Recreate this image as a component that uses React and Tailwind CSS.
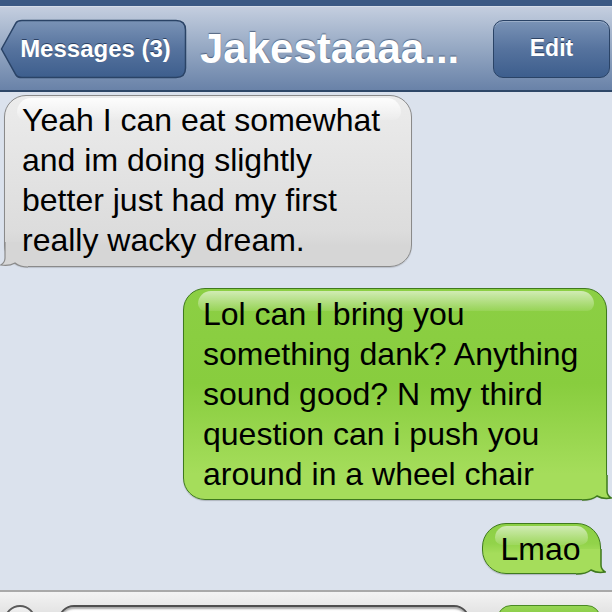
import React from "react";

const font = { fontFamily: '"Liberation Sans", Arial, sans-serif' };

function BackButton() {
  return (
    <div className="relative w-[187px] h-[60px] flex items-center">
      <svg className="absolute inset-0" width="187" height="60" viewBox="0 0 187 60">
        <defs>
          <linearGradient id="bb" x1="0" y1="0" x2="0" y2="1">
            <stop offset="0" stopColor="#7a93b6" />
            <stop offset="0.5" stopColor="#56739e" />
            <stop offset="1" stopColor="#3d5e8d" />
          </linearGradient>
        </defs>
        <path
          d="M1.5 30 L16 4 Q17.5 1.5 22 1.5 L176 1.5 Q185.5 1.5 185.5 11 L185.5 49 Q185.5 58.5 176 58.5 L22 58.5 Q17.5 58.5 16 56 Z"
          fill="url(#bb)"
          stroke="#2a4366"
          strokeWidth="1.5"
        />
      </svg>
      <span className="relative w-full pl-[4px] text-center text-[24px] font-bold text-white [text-shadow:0_-1px_0_rgba(20,40,70,0.7)]">
        Messages (3)
      </span>
    </div>
  );
}

function GrayTail() {
  return (
    <svg className="absolute left-[-5px] bottom-[-2px]" width="28" height="26" viewBox="0 0 28 26">
      <path d="M5 0 L5 16 Q5 20.5 0.8 23 Q9 24.5 15 21 Q20 25 28 25 L28 0 Z" fill="#d6d6d6" />
      <path d="M5 0 L5 16 Q5 20.5 0.8 23 Q9 24.5 15 21 Q20 25 28 25" fill="none" stroke="#8a8a8a" strokeWidth="1.2" />
    </svg>
  );
}

function GreenTail({ className }) {
  return (
    <svg className={className} width="30" height="26" viewBox="0 0 30 26">
      <path d="M25 0 L25 16 Q25 20.5 29.2 23 Q21 24.5 15 21 Q10 25 0 25 L0 0 Z" fill="#a5dd5b" />
      <path d="M25 0 L25 16 Q25 20.5 29.2 23 Q21 24.5 15 21 Q10 25 0 25" fill="none" stroke="#3f7a1e" strokeWidth="1.5" />
    </svg>
  );
}

export default function App() {
  return (
    <div className="w-[612px] h-[612px] overflow-hidden flex flex-col bg-[#dbe2ed]" style={font}>
      <div className="h-[6px] bg-[#3b5984]" />
      <div className="h-[86px] flex items-center border-t border-[#d5dde9] border-b-2 border-b-[#2e4768] bg-linear-to-b from-[#c4cedf] via-[#95a8c3] to-[#6982a8]">
        <BackButton />
        <div className="ml-[13px] text-[42px] font-bold text-white leading-none [text-shadow:0_-1px_1px_rgba(30,50,80,0.6)]">
          Jakestaaaa...
        </div>
        <div className="ml-auto mr-[2px] w-[117px] h-[58px] rounded-[10px] border-[1.5px] border-[#2a4366] bg-linear-to-b from-[#7a93b6] via-[#56739e] to-[#3d5e8d] flex items-center justify-center shadow-[inset_0_1px_0_rgba(255,255,255,0.25)]">
          <span className="text-[23px] font-bold text-white [text-shadow:0_-1px_0_rgba(20,40,70,0.7)]">Edit</span>
        </div>
      </div>

      <div className="flex-1 flex flex-col">
        <div className="relative ml-[4px] mt-[3px] w-[408px] h-[172px] rounded-[22px] border border-[#8a8a8a] bg-[linear-gradient(to_bottom,#ececec,#dcdcdc_80%,#d6d6d6_88%,#d6d6d6)] shadow-[0_1px_1px_rgba(0,0,0,0.15)] pt-[4px] pl-[17px]">
          <div className="absolute top-[2px] left-[12px] right-[10px] h-[22px] rounded-t-[18px] rounded-b-[10px] bg-linear-to-b from-white/90 to-white/10" />
          <GrayTail />
          <div className="relative text-[32px] leading-[40px] text-black">
            <div>Yeah I can eat somewhat</div>
            <div>and im doing slightly</div>
            <div>better just had my first</div>
            <div>really wacky dream.</div>
          </div>
        </div>

        <div className="relative self-end mr-[5px] mt-[21px] w-[424px] h-[212px] rounded-[22px] border-[1.5px] border-[#3f7a1e] bg-[linear-gradient(to_bottom,#8ccf44,#88cd3e_45%,#a5dd5b_88%,#a5dd5b)] shadow-[0_1px_1px_rgba(0,0,0,0.2)] pt-[5px] pl-[19px]">
          <div className="absolute top-[2px] left-[14px] right-[12px] h-[20px] rounded-t-[18px] rounded-b-[10px] bg-linear-to-b from-white/60 to-white/10" />
          <GreenTail className="absolute right-[-6px] bottom-[-2px]" />
          <div className="relative text-[32px] leading-[40px] text-black">
            <div>Lol can I bring you</div>
            <div>something dank? Anything</div>
            <div>sound good? N my third</div>
            <div>question can i push you</div>
            <div>around in a wheel chair</div>
          </div>
        </div>

        <div className="relative self-end mr-[11px] mt-[23px] w-[119px] h-[51px] rounded-[24px] border-[1.5px] border-[#3f7a1e] bg-[linear-gradient(to_bottom,#8ccf44,#92d34a_40%,#a5dd5b_60%,#a5dd5b)] shadow-[0_1px_1px_rgba(0,0,0,0.2)] flex items-center justify-center">
          <div className="absolute top-[2px] left-[12px] right-[12px] h-[19px] rounded-t-[16px] rounded-b-[10px] bg-linear-to-b from-white/60 to-white/10" />
          <GreenTail className="absolute right-[-6px] bottom-[-2px]" />
          <span className="relative text-[32px] leading-none text-black pr-[2px]">Lmao</span>
        </div>
      </div>

      <div className="h-[22px] border-t-2 border-[#a9a9a9] bg-linear-to-b from-[#f3f3f3] to-[#e4e4e4] flex items-start pt-[13px]">
        <div className="ml-[4px] w-[32px] h-[32px] rounded-full border-2 border-[#5a5a5a] bg-linear-to-b from-[#f2f2f2] to-[#c8c8c8]" />
        <div className="ml-[22px] w-[412px] h-[34px] rounded-[16px] border-2 border-[#4f4f4f] bg-white shadow-[inset_0_2px_2px_rgba(0,0,0,0.35)]" />
        <div className="ml-[27px] w-[104px] h-[34px] rounded-[14px] border border-[#4a8a24] bg-linear-to-b from-[#96d553] to-[#6fb52f]" />
      </div>
    </div>
  );
}
